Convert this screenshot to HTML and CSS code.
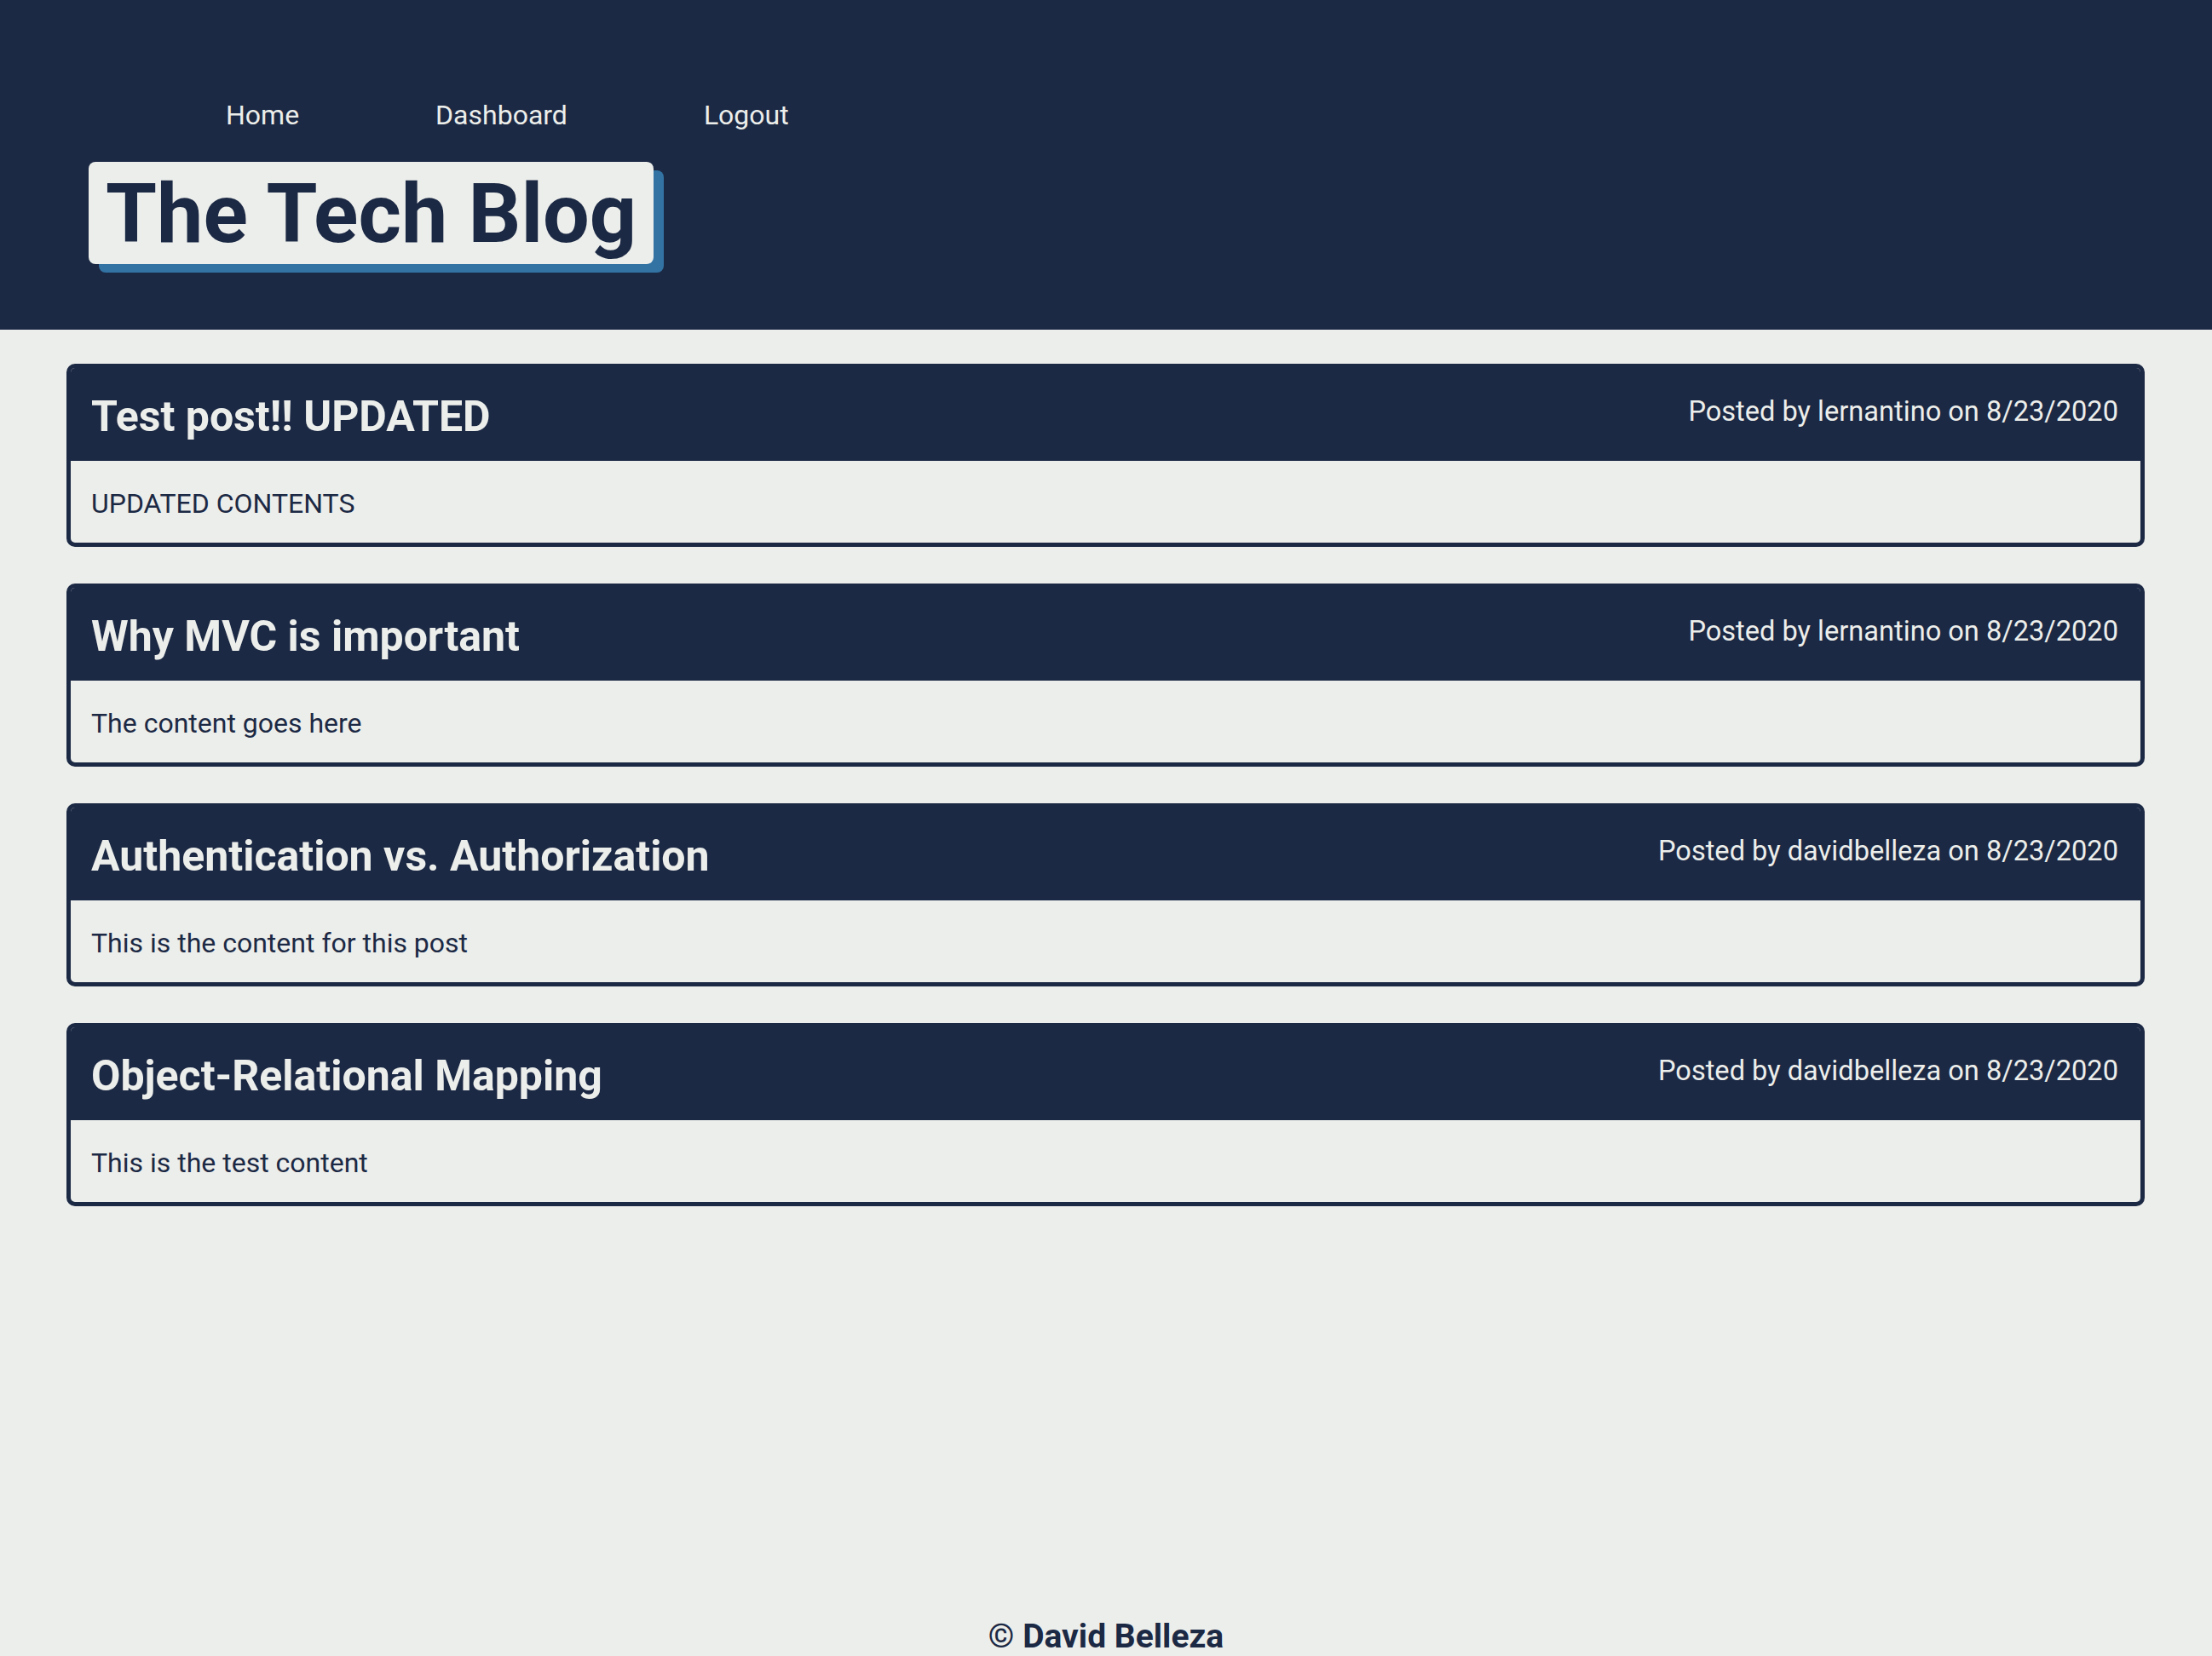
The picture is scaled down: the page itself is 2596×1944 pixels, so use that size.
FILE: index.html
```html
<!DOCTYPE html>
<html lang="en">
<head>
<meta charset="utf-8">
<title>The Tech Blog</title>
<link rel="stylesheet" href="styles.css">
</head>
<body>
<div class="page">
  <header class="site-header">
    <nav class="nav">
      <a class="nav-link" href="#">Home</a>
      <a class="nav-link" href="#">Dashboard</a>
      <a class="nav-link" href="#">Logout</a>
    </nav>
    <h1 class="brand">The Tech Blog</h1>
  </header>
  <main class="posts">
    <article class="post">
      <div class="post-head">
        <h2 class="post-title">Test post!! UPDATED</h2>
        <span class="post-meta">Posted by lernantino on 8/23/2020</span>
      </div>
      <div class="post-body"><p>UPDATED CONTENTS</p></div>
    </article>
    <article class="post">
      <div class="post-head">
        <h2 class="post-title">Why MVC is important</h2>
        <span class="post-meta">Posted by lernantino on 8/23/2020</span>
      </div>
      <div class="post-body"><p>The content goes here</p></div>
    </article>
    <article class="post">
      <div class="post-head">
        <h2 class="post-title">Authentication vs. Authorization</h2>
        <span class="post-meta">Posted by davidbelleza on 8/23/2020</span>
      </div>
      <div class="post-body"><p>This is the content for this post</p></div>
    </article>
    <article class="post">
      <div class="post-head">
        <h2 class="post-title">Object-Relational Mapping</h2>
        <span class="post-meta">Posted by davidbelleza on 8/23/2020</span>
      </div>
      <div class="post-body"><p>This is the test content</p></div>
    </article>
  </main>
  <footer class="site-footer">© David Belleza</footer>
</div>
</body>
</html>
```

FILE: styles.css
```css
* { box-sizing: border-box; }
html, body { margin: 0; padding: 0; }
body {
  background: #eceeeb;
  color: #1c2944;
  font-family: Roboto, "Noto Sans", "Liberation Sans", sans-serif;
  overflow: hidden;
}
.page {
  min-height: 100vh;
  display: flex;
  flex-direction: column;
}
.site-header {
  background: #1c2944;
  padding: 111px 0 77px 104px;
}
.nav {
  display: flex;
  gap: 160px;
  padding-left: 161px;
  height: 48px;
}
.nav-link {
  color: #eceeeb;
  text-decoration: none;
  font-size: 32px;
  line-height: 48px;
}
.brand {
  display: inline-block;
  margin: 31px 0 0 0;
  padding: 3px 20px 0 20px;
  height: 120px;
  font-size: 97px;
  line-height: 117px;
  font-weight: 700;
  background: #eceeeb;
  color: #1c2944;
  border-radius: 8px;
  box-shadow: 12px 10px 0 #3273a3;
}
.posts {
  display: flex;
  flex-direction: column;
  gap: 43px;
  padding: 40px 79px 0 78px;
}
.post {
  border: 5px solid #1c2944;
  border-radius: 10px;
  overflow: hidden;
}
.post-head {
  background: #1c2944;
  color: #eceeeb;
  display: flex;
  justify-content: space-between;
  align-items: flex-start;
  padding: 29px 26px 23px 24px;
}
.post-title {
  margin: 0;
  font-size: 50px;
  line-height: 57px;
  font-weight: 700;
}
.post-meta {
  font-size: 32.6px;
  line-height: 44px;
}
.post-body {
  padding: 26px 24px 22px;
}
.post-body p {
  margin: 0;
  font-size: 32px;
  line-height: 48px;
}
.site-footer {
  margin-top: auto;
  text-align: center;
  font-size: 39px;
  line-height: 46px;
  font-weight: 700;
}
```
